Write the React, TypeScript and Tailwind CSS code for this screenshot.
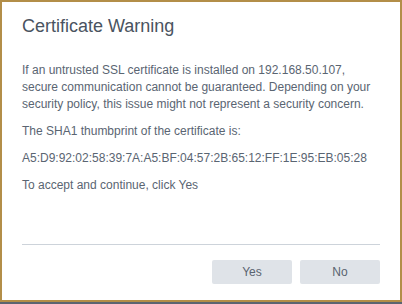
import React from 'react';

const bodyFont = { fontFamily: '"Liberation Sans", Arial, sans-serif' };

function DialogButton({ label }: { label: string }) {
  return (
    <button
      type="button"
      className="h-[24px] w-[80px] rounded-[2px] bg-[#dfe3e8] text-[12px] leading-[24px] text-[#5a6470]"
    >
      {label}
    </button>
  );
}

export default function App() {
  return (
    <div className="h-[304px] w-[402px] bg-[#5b6571]" style={bodyFont}>
      <div className="flex h-[302px] w-[402px] flex-col border-2 border-[#b38e48] bg-white px-[20px] pt-[12px]">
        <h2 className="h-[24px] text-[18px] leading-[24px] text-[#4a5360]">Certificate Warning</h2>

        <div className="mt-[24px] flex flex-col gap-[10px] text-[12px] leading-[17px] text-[#5a6572]">
          <p>
            If an untrusted SSL certificate is installed on 192.168.50.107, secure communication
            cannot be guaranteed. Depending on your security policy, this issue might not represent
            a security concern.
          </p>
          <p>The SHA1 thumbprint of the certificate is:</p>
          <p>A5:D9:92:02:58:39:7A:A5:BF:04:57:2B:65:12:FF:1E:95:EB:05:28</p>
          <p>To accept and continue, click Yes</p>
        </div>

        <div className="flex-1" />

        <div className="flex justify-end gap-[8px] border-t border-[#cdd3da] pt-[15px] pb-[16px]">
          <DialogButton label="Yes" />
          <DialogButton label="No" />
        </div>
      </div>
    </div>
  );
}
